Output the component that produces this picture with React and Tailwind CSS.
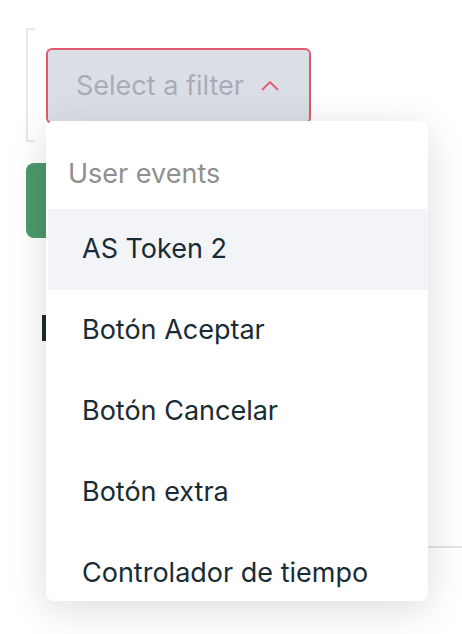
export default function App() {
  const items = ["AS Token 2", "Botón Aceptar", "Botón Cancelar", "Botón extra", "Controlador de tiempo"];

  return (
    <div className="relative h-[634px] w-[462px] overflow-hidden bg-white font-['Inter',sans-serif]">
      {/* background page */}
      <div className="flex pl-[26px] pt-[28px]">
        <div className="h-[114px] w-[9px] border-y-2 border-l-2 border-[#e6e6ec]" />
        <div className="ml-[11px] mt-[20px] flex h-[76px] w-[265px] items-center rounded-md border-2 border-[#e05a6e] bg-[#dcdee5] pl-[28px]">
          <span className="text-[27px] text-[#a9acb8]">Select a filter</span>
          <svg className="ml-[16px] h-[14px] w-[20px]" viewBox="0 0 20 14" fill="none">
            <path d="M2 11 L10 3 L18 11" stroke="#e05a6e" strokeWidth="1.8" />
          </svg>
        </div>
      </div>
      <div className="ml-[26px] mt-[21px] h-[75px] w-[80px] rounded-lg bg-[#4a9a6a]" />
      <div className="ml-[42px] mt-[77px] h-[26px] w-[4px] bg-[#1e2d33]" />
      <div className="ml-[200px] mt-[205px] h-[2px] bg-[#e5e5e5]" />

      {/* dropdown */}
      <div className="absolute left-[46px] top-[121px] h-[480px] w-[382px] overflow-hidden rounded-lg bg-white pl-[2px] shadow-[0_8px_40px_rgba(0,0,0,0.14)]">
        <div className="pb-[15px] pl-[20px] pt-[33px] text-[27px] leading-[40px] text-[#8f8f8f]">User events</div>
        {items.map((item, i) => (
          <div
            key={item}
            className={`flex h-[81px] items-center pl-[34px] text-[27px] text-[#182c33] ${i === 0 ? "bg-[#f3f4f8]" : ""}`}
          >
            {item}
          </div>
        ))}
      </div>
    </div>
  );
}
